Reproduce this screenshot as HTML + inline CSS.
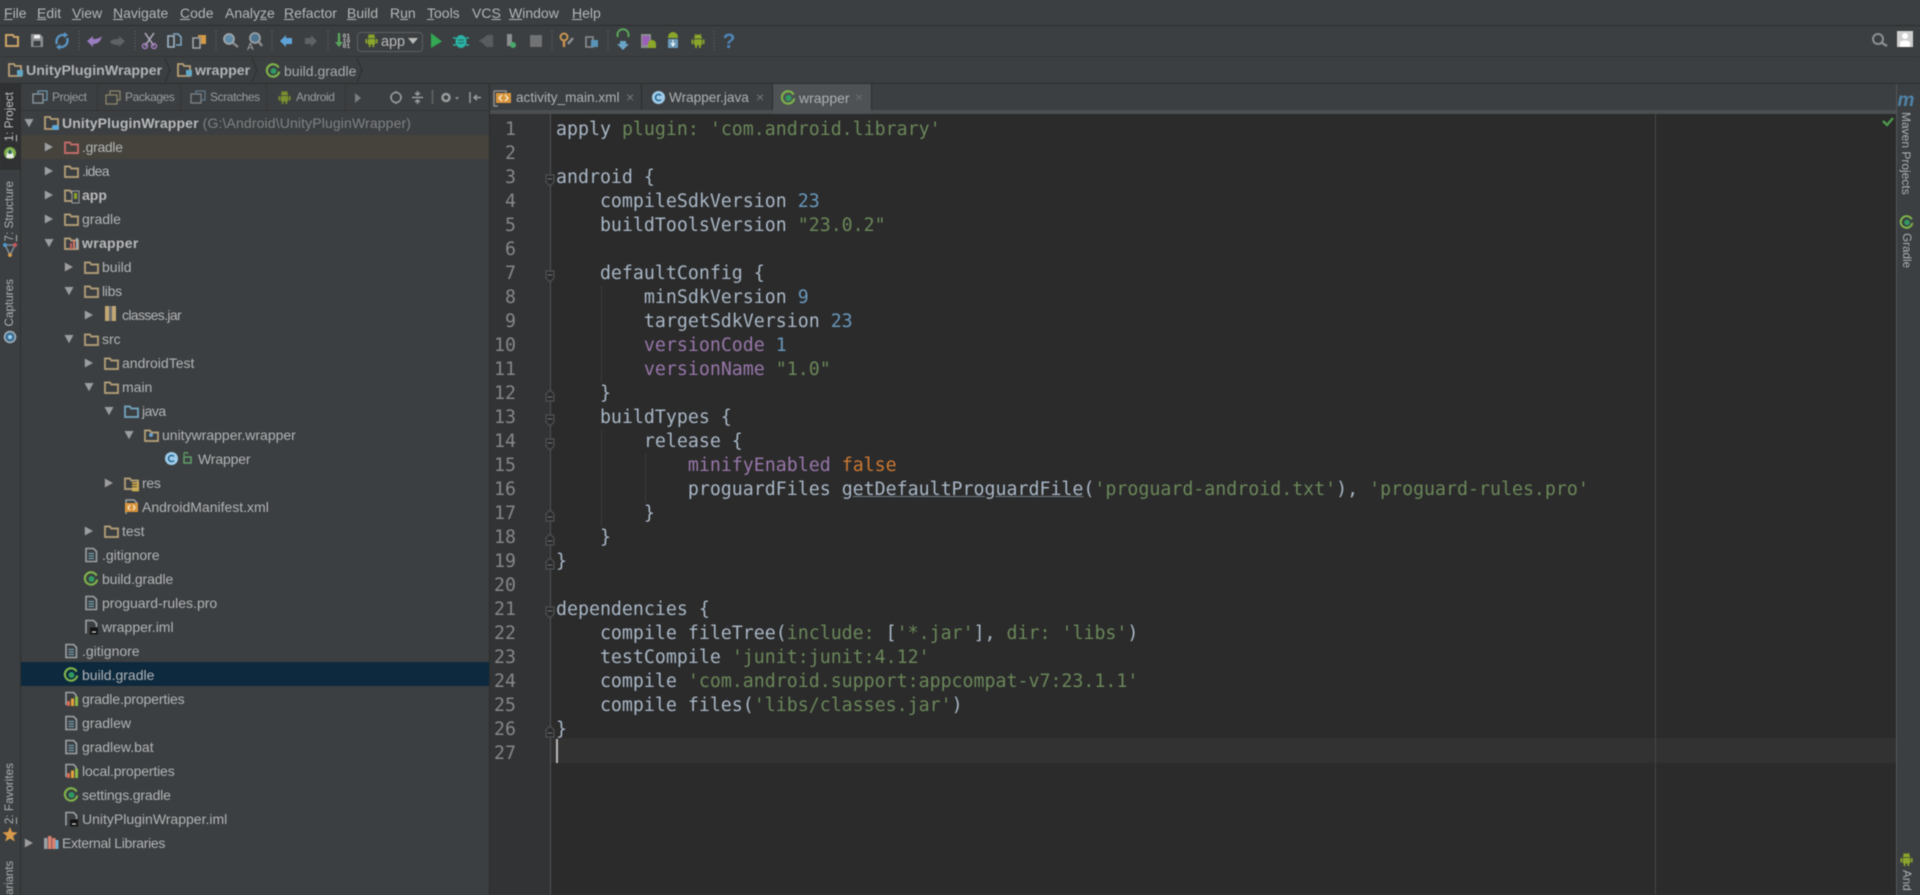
<!DOCTYPE html>
<html><head><meta charset="utf-8"><title>UnityPluginWrapper</title>
<style>
html,body{margin:0;padding:0;width:1920px;height:895px;overflow:hidden;background:#3c3f41}
#root{position:absolute;left:0;top:0;width:1920px;height:895px;overflow:hidden;font-family:"Liberation Sans",sans-serif;font-size:14px;color:#bbbbbb;filter:blur(.45px)}
.a{position:absolute;white-space:nowrap}
.b{position:absolute}
.m{top:5px;line-height:17px;font-size:14px;color:#b4b6b8}
.t{position:absolute;white-space:nowrap;line-height:24px;height:24px;color:#b2b4b6}
.tb{font-weight:bold;color:#b8babc}
pre{margin:0;position:absolute;font-family:"DejaVu Sans Mono",monospace;font-size:18.25px;line-height:24px}
.s{color:#6a8759}.n{color:#6897bb}.p{color:#9876aa}.k{color:#cc7832}.g{color:#6a8759}
.v{position:absolute;white-space:nowrap;font-size:11.7px;color:#adafb1;line-height:14px}
.vl{writing-mode:vertical-rl;transform:rotate(180deg);left:3px}
.vr{writing-mode:vertical-rl;left:1899px}
.th{top:89px;line-height:17px;font-size:12px;letter-spacing:-.4px;color:#9a9c9e}
.et{top:89px;line-height:18px;font-size:13.6px;color:#afb1b3}
.x{top:88px;line-height:18px;font-size:14px;color:#77797b}
svg#o{position:absolute;left:0;top:0}
u.dim{text-decoration-color:#70797f}
</style></head><body><div id="root">

<!-- frame backgrounds -->
<div class="b" style="left:0;top:25px;width:1920px;height:1px;background:#2b2d2e"></div>
<div class="b" style="left:0;top:56px;width:1920px;height:1px;background:#323436"></div>
<div class="b" style="left:0;top:83px;width:1920px;height:1px;background:#2b2d2e"></div>
<div class="b" style="left:0;top:84px;width:20px;height:86px;background:#2f3132"></div>
<div class="b" style="left:20px;top:84px;width:1px;height:811px;background:#2d2f30"></div>
<div class="b" style="left:21px;top:110px;width:468px;height:1px;background:#323436"></div>
<div class="b" style="left:21px;top:135px;width:468px;height:24px;background:#45433b"></div>
<div class="b" style="left:21px;top:662px;width:468px;height:24px;background:#0d293e"></div>
<div class="b" style="left:489px;top:84px;width:1px;height:811px;background:#2b2d2e"></div>
<!-- tool header separators -->
<div class="b" style="left:97px;top:84px;width:1px;height:26px;background:#333537"></div>
<div class="b" style="left:180px;top:84px;width:1px;height:26px;background:#333537"></div>
<div class="b" style="left:266px;top:84px;width:1px;height:26px;background:#333537"></div>
<div class="b" style="left:345px;top:84px;width:1px;height:26px;background:#333537"></div>
<!-- editor -->
<div class="b" style="left:490px;top:114px;width:1406px;height:781px;background:#2b2b2b"></div>
<div class="b" style="left:490px;top:114px;width:60px;height:781px;background:#313335"></div>
<div class="b" style="left:550px;top:114px;width:1px;height:781px;background:#505254"></div>
<div class="b" style="left:490px;top:110px;width:1406px;height:4px;background:#4c4f51"></div>
<div class="b" style="left:773px;top:84px;width:98px;height:30px;background:#4e5254"></div>
<div class="b" style="left:551px;top:738px;width:1345px;height:25px;background:#323232"></div>
<div class="b" style="left:1655px;top:114px;width:1px;height:781px;background:#444648"></div>
<div class="b" style="left:556px;top:739px;width:2px;height:24px;background:#bbbbbb"></div>
<!-- tab separators -->
<div class="b" style="left:641px;top:84px;width:1px;height:26px;background:#2b2d2e"></div>
<div class="b" style="left:772px;top:84px;width:1px;height:26px;background:#2b2d2e"></div>
<div class="b" style="left:871px;top:84px;width:1px;height:26px;background:#2b2d2e"></div>
<!-- indent guides -->
<div class="b" style="left:601px;top:286px;width:1px;height:96px;background:#3a3a3a"></div>
<div class="b" style="left:601px;top:430px;width:1px;height:96px;background:#3a3a3a"></div>
<div class="b" style="left:645px;top:454px;width:1px;height:48px;background:#3a3a3a"></div>
<!-- right strip -->
<div class="b" style="left:1896px;top:84px;width:1px;height:811px;background:#55585a"></div>

<!-- menu -->
<div class="a m" style="left:4px"><u>F</u>ile</div>
<div class="a m" style="left:37px"><u>E</u>dit</div>
<div class="a m" style="left:72px"><u>V</u>iew</div>
<div class="a m" style="left:113px"><u>N</u>avigate</div>
<div class="a m" style="left:180px"><u>C</u>ode</div>
<div class="a m" style="left:225px">Analy<u>z</u>e</div>
<div class="a m" style="left:284px"><u>R</u>efactor</div>
<div class="a m" style="left:347px"><u>B</u>uild</div>
<div class="a m" style="left:390px">R<u>u</u>n</div>
<div class="a m" style="left:427px"><u>T</u>ools</div>
<div class="a m" style="left:472px">VC<u>S</u></div>
<div class="a m" style="left:509px"><u>W</u>indow</div>
<div class="a m" style="left:572px"><u>H</u>elp</div>

<!-- combo -->
<div class="b" style="left:357px;top:32px;width:64px;height:18px;border:1px solid #5c5f61;border-radius:4px"></div>
<div class="a" style="left:381px;top:34px;line-height:17px;font-size:14.4px;color:#bbb">app</div>

<!-- breadcrumb -->
<div class="a tb" style="left:26px;top:63px;line-height:17px;color:#b2b4b6;font-size:14.2px">UnityPluginWrapper</div>
<div class="a tb" style="left:195px;top:63px;line-height:17px;color:#b2b4b6;font-size:14.2px">wrapper</div>
<div class="a" style="left:284px;top:63px;line-height:17px;color:#a8aaac">build.gradle</div>

<!-- tool header -->
<div class="a th" style="left:52px">Project</div>
<div class="a th" style="left:125px">Packages</div>
<div class="a th" style="left:210px">Scratches</div>
<div class="a th" style="left:296px">Android</div>

<!-- editor tabs -->
<div class="a et" style="left:516px">activity_main.xml</div>
<div class="a x" style="left:626px">×</div>
<div class="a et" style="left:669px">Wrapper.java</div>
<div class="a x" style="left:756px">×</div>
<div class="a et" style="left:799px;color:#aeb0b2;font-size:14px">wrapper</div>
<div class="a x" style="left:855px;color:#6c6e70">×</div>

<!-- vertical labels -->
<div class="v vl" style="top:92px;color:#bfc1c3"><u>1</u>: Project</div>
<div class="v vl" style="top:181px"><u>7</u>: Structure</div>
<div class="v vl" style="top:279px">Captures</div>
<div class="v vl" style="top:763px"><u>2</u>: Favorites</div>
<div class="v vl" style="top:861px;font-size:11.5px;letter-spacing:-.1px">ariants</div>
<div class="v vr" style="top:112px;font-size:12px">Maven Projects</div>
<div class="v vr" style="top:233px">Gradle</div>
<div class="v vr" style="top:870px">And</div>

<!-- project tree text -->
<div class="t tb" style="left:62px;top:111px;letter-spacing:.13px">UnityPluginWrapper <span style="font-weight:normal;color:#808284;font-size:14px">(G:\Android\UnityPluginWrapper)</span></div>
<div class="t" style="left:82px;top:135px;letter-spacing:-.3px">.gradle</div>
<div class="t" style="left:82px;top:159px;letter-spacing:-.7px">.idea</div>
<div class="t tb" style="left:82px;top:183px">app</div>
<div class="t" style="left:82px;top:207px">gradle</div>
<div class="t tb" style="left:82px;top:231px;letter-spacing:.3px">wrapper</div>
<div class="t" style="left:102px;top:255px">build</div>
<div class="t" style="left:102px;top:279px;letter-spacing:-.3px">libs</div>
<div class="t" style="left:122px;top:303px;letter-spacing:-.65px">classes.jar</div>
<div class="t" style="left:102px;top:327px">src</div>
<div class="t" style="left:122px;top:351px">androidTest</div>
<div class="t" style="left:122px;top:375px">main</div>
<div class="t" style="left:142px;top:399px;letter-spacing:-.5px">java</div>
<div class="t" style="left:162px;top:423px">unitywrapper.wrapper</div>
<div class="t" style="left:198px;top:447px;letter-spacing:-.15px">Wrapper</div>
<div class="t" style="left:142px;top:471px;letter-spacing:-.3px">res</div>
<div class="t" style="left:142px;top:495px">AndroidManifest.xml</div>
<div class="t" style="left:122px;top:519px">test</div>
<div class="t" style="left:102px;top:543px">.gitignore</div>
<div class="t" style="left:102px;top:567px;letter-spacing:-.1px">build.gradle</div>
<div class="t" style="left:102px;top:591px">proguard-rules.pro</div>
<div class="t" style="left:102px;top:615px">wrapper.iml</div>
<div class="t" style="left:82px;top:639px">.gitignore</div>
<div class="t" style="left:82px;top:663px">build.gradle</div>
<div class="t" style="left:82px;top:687px;letter-spacing:-.15px">gradle.properties</div>
<div class="t" style="left:82px;top:711px">gradlew</div>
<div class="t" style="left:82px;top:735px">gradlew.bat</div>
<div class="t" style="left:82px;top:759px;letter-spacing:-.15px">local.properties</div>
<div class="t" style="left:82px;top:783px;letter-spacing:-.15px">settings.gradle</div>
<div class="t" style="left:82px;top:807px">UnityPluginWrapper.iml</div>
<div class="t" style="left:62px;top:831px;letter-spacing:-.33px">External Libraries</div>

<!-- gutter numbers -->
<pre style="left:480px;top:118px;width:36px;text-align:right;color:#85888a">1
2
3
4
5
6
7
8
9
10
11
12
13
14
15
16
17
18
19
20
21
22
23
24
25
26
27</pre>

<!-- code -->
<pre style="left:556px;top:118px;color:#a9b7c6">apply <span class="g">plugin: 'com.android.library'</span>

android {
    compileSdkVersion <span class="n">23</span>
    buildToolsVersion <span class="s">"23.0.2"</span>

    defaultConfig {
        minSdkVersion <span class="n">9</span>
        targetSdkVersion <span class="n">23</span>
        <span class="p">versionCode</span> <span class="n">1</span>
        <span class="p">versionName</span> <span class="s">"1.0"</span>
    }
    buildTypes {
        release {
            <span class="p">minifyEnabled</span> <span class="k">false</span>
            proguardFiles <u class="dim">getDefaultProguardFile</u>(<span class="s">'proguard-android.txt'</span>), <span class="s">'proguard-rules.pro'</span>
        }
    }
}

dependencies {
    compile fileTree(<span class="g">include:</span> [<span class="s">'*.jar'</span>], <span class="g">dir:</span> <span class="s">'libs'</span>)
    testCompile <span class="s">'junit:junit:4.12'</span>
    compile <span class="s">'com.android.support:appcompat-v7:23.1.1'</span>
    compile files(<span class="s">'libs/classes.jar'</span>)
}</pre>

<!-- icon overlay -->
<svg id="o" width="1920" height="895" viewBox="0 0 1920 895" xmlns="http://www.w3.org/2000/svg">
<defs>
<pattern id="dith" width="3" height="3" patternUnits="userSpaceOnUse"><rect width="1.5" height="1.5" fill="#77797b"/><rect x="1.5" y="1.5" width="1.5" height="1.5" fill="#77797b"/></pattern>
<symbol id="fd" viewBox="0 0 16 16"><path d="M2 3.5H7L8.2 5.5H15V14H2Z" fill="none" stroke="#ae9a76" stroke-width="1.9"/></symbol>
<symbol id="fr" viewBox="0 0 16 16"><path d="M2 3.5H7L8.2 5.5H15V14H2Z" fill="none" stroke="#c46a6a" stroke-width="1.9"/></symbol>
<symbol id="fb" viewBox="0 0 16 16"><path d="M2 3.5H7L8.2 5.5H15V14H2Z" fill="none" stroke="#6f9fb8" stroke-width="1.9"/></symbol>
<symbol id="gr" viewBox="0 0 16 16"><path d="M13.6 4.6A6.2 6.2 0 1 0 14.2 8.5" fill="none" stroke="#7db34a" stroke-width="2.2"/><circle cx="8.5" cy="8" r="3" fill="#2f9a62"/></symbol>
<symbol id="fl" viewBox="0 0 16 16"><path d="M3 1.5H10.5L13.5 4.5V14.5H3Z" fill="none" stroke="#9ba3a7" stroke-width="1.6"/><path d="M5.5 6.5H11M5.5 9H11M5.5 11.5H11" stroke="#6f9bab" stroke-width="1.2"/></symbol>
<symbol id="pr" viewBox="0 0 16 16"><path d="M3 14V1.5H10.5L13 4V7" fill="none" stroke="#9ba3a7" stroke-width="1.6"/><rect x="4" y="10" width="3" height="5" fill="#d9694f"/><rect x="8" y="7.5" width="3" height="7.5" fill="#e6a33c"/><rect x="12" y="5.5" width="3" height="9.5" fill="#8fb84a"/></symbol>
<symbol id="im" viewBox="0 0 16 16"><path d="M3 14.5V1.5H10.5L13.5 4.5V8" fill="none" stroke="#9ba3a7" stroke-width="1.6"/><rect x="7" y="8.5" width="8" height="7" fill="#151515"/><path d="M9 13H13" stroke="#ddd" stroke-width="1.2"/></symbol>
<symbol id="cl" viewBox="0 0 16 16"><circle cx="8" cy="8" r="7" fill="#9ecbea"/><path d="M10.6 5.8A3.3 3.3 0 1 0 10.6 10.2" fill="none" stroke="#1f5c86" stroke-width="1.5"/></symbol>
<symbol id="an" viewBox="0 0 16 16"><path d="M4 5.5A4 4 0 0 1 12 5.5Z" fill="#8aa62b"/><rect x="4" y="6.3" width="8" height="6" rx="1" fill="#8aa62b"/><rect x="1.5" y="6.3" width="1.8" height="5" rx=".9" fill="#8aa62b"/><rect x="12.7" y="6.3" width="1.8" height="5" rx=".9" fill="#8aa62b"/><rect x="5.2" y="12" width="1.8" height="3" fill="#8aa62b"/><rect x="9" y="12" width="1.8" height="3" fill="#8aa62b"/><path d="M5 1L6 3M11 1L10 3" stroke="#8aa62b"/></symbol>
<symbol id="fo" viewBox="0 0 16 16"><path d="M4 2H12V9L8 13L4 9Z" fill="#2b2b2b" stroke="#55575a"/><path d="M5.5 6H10.5" stroke="#75777a"/></symbol>
<symbol id="fc" viewBox="0 0 16 16"><path d="M4 13H12V6L8 2L4 6Z" fill="#2b2b2b" stroke="#55575a"/><path d="M5.500 9H10.500" stroke="#75777a"/></symbol>
<symbol id="r" viewBox="0 0 10 10"><path d="M.8 .5L9 5L.8 9.500Z" fill="#9b9d9f"/></symbol>
<symbol id="d" viewBox="0 0 10 10"><path d="M.5 1H9.500L5 9.200Z" fill="#9b9d9f"/></symbol>
</defs>

<!-- toolbar -->
<g fill="none">
<path d="M6 35H13L14 37H18V46H6Z" stroke="#c9a468" stroke-width="2"/>
<path d="M31 34H40L43 37V47H31Z" fill="#8b8e90"/><rect x="34" y="35" width="6" height="3.5" fill="#eee"/><rect x="33.500" y="41" width="7" height="5" fill="#3c3f41"/>
<path d="M57 44A6.500 6.500 0 0 1 62 35H66M67 38A6.500 6.500 0 0 1 62 47H58" stroke="#5a94c4" stroke-width="2.400"/>
<path d="M64 32L68 35L64 38ZM60 44L56 47L60 50Z" fill="#5a94c4"/>
<path d="M79 31V51M135 31V51M216 31V51M272 31V51M328 31V51M552 31V51M608 31V51M714 31V51" stroke="#6a6c6e" stroke-dasharray="1 2"/>
<path d="M87 41L93 36V39C97 39 100 38 102 36C101 41 98 44 93 44V47Z" fill="#9a7cc0"/>
<path d="M125 41L119 36V39C115 39 112 39 110 42C112 44 114 45 119 45V47Z" fill="#5f6264"/>
<path d="M145 33L154 46M154 33L145 46" stroke="#a9a2b5" stroke-width="1.600"/><circle cx="145" cy="46" r="2.500" stroke="#a07cc0" stroke-width="1.500"/><circle cx="154" cy="46" r="2.500" stroke="#a07cc0" stroke-width="1.500"/>
<path d="M168 36H174V47H168Z" stroke="#9fb5c5" stroke-width="1.600"/><path d="M173 34H178L181 37V45H176" stroke="#7fa7c4" stroke-width="1.600"/>
<path d="M193 38H200V48H193Z" stroke="#9fa5a8" stroke-width="1.600"/><path d="M198 35H206V44H201V37H198Z" fill="#d49a45"/>
<circle cx="229" cy="39" r="5" fill="#5f8ba8" stroke="#a0a6aa" stroke-width="1.800"/><path d="M233 43L238 47" stroke="#8a8c8e" stroke-width="2.400"/>
<circle cx="255" cy="38" r="5" fill="#4f7690" stroke="#9aa0a4" stroke-width="1.800"/><path d="M259 42L262 46" stroke="#8a8c8e" stroke-width="2.400"/>
<text x="247" y="50" font-family="Liberation Sans" font-size="10" fill="#a8aaac">A</text>
<path d="M280 41L286 35V38H292V44H286V47Z" fill="#5fa4d8"/>
<path d="M317 41L311 35V38H305V44H311V47Z" fill="#5f6264"/>
<path d="M339 33V43" stroke="#5aa55a" stroke-width="2.400"/><path d="M335 42L339 47L343 42Z" fill="#5aa55a"/>
<text x="342.500" y="38" font-family="Liberation Mono" font-size="6.500" font-weight="bold" fill="#bbb">01</text>
<text x="342.500" y="43" font-family="Liberation Mono" font-size="6.500" font-weight="bold" fill="#bbb">10</text>
<text x="342.500" y="48" font-family="Liberation Mono" font-size="6.500" font-weight="bold" fill="#bbb">01</text>
<path d="M431 33L442 41.500L431 48Z" fill="#34a853"/>
<ellipse cx="461" cy="41.500" rx="5.500" ry="6.500" fill="#2bb3a5"/><path d="M453 38H456M466 38H469M453 45H456M466 45H469" stroke="#2bb3a5" stroke-width="1.400"/><path d="M458 40H464M458 43H464" stroke="#24665f"/>
<path d="M479 41L487 35H493V47H487Z" fill="url(#dith)"/>
<rect x="507" y="34" width="5" height="12" fill="#8b8e90"/><circle cx="513" cy="45" r="3" fill="#46a86b"/>
<rect x="530" y="35" width="12" height="12" fill="#707274"/>
<circle cx="564" cy="37" r="3.500" stroke="#c99552" stroke-width="2"/><path d="M564 41V47" stroke="#c99552" stroke-width="2.400"/><path d="M568 44L573 38" stroke="#909294" stroke-width="2.400"/>
<path d="M586 37H593V47H586Z" stroke="#8b8e90" stroke-width="1.600"/><path d="M591 40H598V47H591Z" fill="#5a93b8"/>
<path d="M618 37A5.500 5.500 0 1 1 628 37" stroke="#5aa55a" stroke-width="2"/><path d="M620 41H626V44H629L623 50L617 44H620Z" fill="#6aa5c8"/>
<rect x="641" y="34" width="10" height="14" fill="#8b8e90"/><rect x="642.500" y="36" width="7" height="9" fill="#9c60ba"/><path d="M648 44A3.500 3.500 0 0 1 656 44V48H648Z" fill="#8aa62b"/>
<path d="M668 37A5 5 0 0 1 678 37V38H668Z" fill="#8aa62b"/><rect x="668" y="39" width="10" height="9" fill="#6a9ab8"/><path d="M673 40V45M671 43L673 46L675 43" stroke="#fff" stroke-width="1"/>
</g>
<use href="#an" x="690" y="33" width="16" height="16"/>
<text x="729" y="48" font-family="Liberation Sans" font-weight="bold" font-size="21" fill="#4e84b5" text-anchor="middle">?</text>
<use href="#an" x="364" y="33" width="15" height="15"/>
<path d="M408 38H418L413 44Z" fill="#bbbbbb"/>
<circle cx="1878" cy="39" r="5" fill="none" stroke="#8d8f91" stroke-width="2"/><path d="M1882 43L1887 46" stroke="#8d8f91" stroke-width="2.400"/>
<rect x="1897" y="31" width="16" height="16" fill="#cfcfcf"/><circle cx="1905" cy="36" r="3" fill="#fff"/><path d="M1900 47V43C1900 41 1903 40.500 1905 40.500C1907 40.500 1910 41 1910 43V47Z" fill="#fff"/>

<!-- breadcrumb icons -->
<g><path d="M9 64H14L15 66H21V76H9Z" fill="none" stroke="#b79f76" stroke-width="1.800"/><rect x="17" y="70" width="6" height="6" fill="#5fa8c8"/></g>
<g><path d="M178 64H183L184 66H190V76H178Z" fill="none" stroke="#b79f76" stroke-width="1.800"/><rect x="186" y="70" width="6" height="6" fill="#5fa8c8"/></g>
<use href="#gr" x="265" y="63" width="16" height="16"/>
<path d="M165 58L170 70L165 82M252 58L257 70L252 82M357 58L362 70L357 82" fill="none" stroke="#2d2f30"/>

<!-- tool header icons -->
<g fill="none" stroke-width="1.300">
<rect x="33" y="94" width="10" height="9" stroke="#8f9ca5"/><path d="M38 94V91H47V100H43" stroke="#6d96ad"/>
<rect x="106" y="95" width="11" height="9" stroke="#8a8468"/><path d="M110 95V91H120V100H117" stroke="#8a8468"/>
<rect x="191" y="94" width="10" height="9" stroke="#7c8489"/><path d="M196 94V91H205V100H201" stroke="#5f7a8a"/>
</g>
<use href="#an" x="277" y="90" width="15" height="15" opacity=".8"/>
<path d="M355 93L361 98L355 103Z" fill="#7a7c7e"/>
<g fill="none" stroke="#9a9c9e" stroke-width="1.500">
<circle cx="396" cy="97.500" r="5"/><path d="M396 91V93M396 102V104M390 97.500H392M400 97.500H402"/>
<path d="M412 97.500H423M417.500 91V95M417.500 100V104M415 93L417.500 95L420 93M415 102L417.500 100L420 102"/>
<path d="M432.500 90V104" stroke="#666"/>
<circle cx="446" cy="97.500" r="3.500" stroke-width="2.500"/>
<path d="M470 92V103M481 97.500H474M477 95L474 97.500L477 100"/>
</g>
<path d="M455 97H459L457 100Z" fill="#8a8c8e"/>

<!-- editor tab icons -->
<path d="M494 91H506V96M494 91V106H498" fill="none" stroke="#8b8e90" stroke-width="1.500"/><rect x="496" y="93" width="15" height="10" fill="#d9953c"/><path d="M502 95L499 98L502 101M505 95L508 98L505 101" stroke="#fff" fill="none"/>
<use href="#cl" x="651" y="90" width="15" height="15"/>
<use href="#gr" x="780" y="90" width="16" height="16"/>

<!-- left strip icons -->
<circle cx="10" cy="153" r="6" fill="#7fb04a"/><path d="M6 158L8 150H12L14 158Z" fill="#eee"/><circle cx="10" cy="152" r="2" fill="#2f6b4a"/>
<path d="M5 245L10 255L15 245M5 245H15" fill="none" stroke="#7a8b99" stroke-width="1.500"/><circle cx="5" cy="245" r="2" fill="#4e9ad4"/><circle cx="15" cy="245" r="2" fill="#c85a5a"/><circle cx="10" cy="255" r="2" fill="#d09a50"/>
<circle cx="10" cy="337" r="5.500" fill="#3d6f95" stroke="#a8b4bc" stroke-width="1.500"/><circle cx="10" cy="337" r="2" fill="#9bd0ee"/>
<path d="M10 827L12 832L17.500 832.500L13.200 836L14.700 841.500L10 838.500L5.300 841.500L6.800 836L2.500 832.500L8 832Z" fill="#d99a4a"/>

<!-- right strip icons -->
<text x="1906" y="106" font-family="Liberation Sans" font-style="italic" font-weight="bold" font-size="19" fill="#4e83a8" text-anchor="middle">m</text>
<use href="#gr" x="1899" y="215" width="15" height="15"/>
<use href="#an" x="1899" y="852" width="15" height="15"/>
<path d="M1883 121L1887 125L1893 118" fill="none" stroke="#4f9a4f" stroke-width="2.400"/>

<!-- tree arrows -->
<use href="#d" x="24" y="118" width="10" height="10"/>
<use href="#r" x="44" y="142" width="10" height="10"/>
<use href="#r" x="44" y="166" width="10" height="10"/>
<use href="#r" x="44" y="190" width="10" height="10"/>
<use href="#r" x="44" y="214" width="10" height="10"/>
<use href="#d" x="44" y="238" width="10" height="10"/>
<use href="#r" x="64" y="262" width="10" height="10"/>
<use href="#d" x="64" y="286" width="10" height="10"/>
<use href="#r" x="84" y="310" width="10" height="10"/>
<use href="#d" x="64" y="334" width="10" height="10"/>
<use href="#r" x="84" y="358" width="10" height="10"/>
<use href="#d" x="84" y="382" width="10" height="10"/>
<use href="#d" x="104" y="406" width="10" height="10"/>
<use href="#d" x="124" y="430" width="10" height="10"/>
<use href="#r" x="104" y="478" width="10" height="10"/>
<use href="#r" x="84" y="526" width="10" height="10"/>
<use href="#r" x="24" y="838" width="10" height="10"/>

<!-- tree icons -->
<path d="M45 117H50L51 119H58V129H45Z" fill="none" stroke="#b79f76" stroke-width="1.800"/><rect x="52" y="125" width="7" height="5" rx="2" fill="#5fa8d8"/>
<use href="#fr" x="63" y="139" width="16" height="16"/>
<use href="#fd" x="63" y="163" width="16" height="16"/>
<use href="#fd" x="63" y="187" width="16" height="16"/><rect x="72" y="191" width="7" height="12" fill="#3c3f41" stroke="#9a9c9e"/><rect x="74" y="193" width="3" height="6" fill="#8aa62b"/>
<use href="#fd" x="63" y="211" width="16" height="16"/>
<use href="#fd" x="63" y="235" width="16" height="16"/><rect x="70" y="243" width="2" height="6" fill="#c95f5f"/><rect x="73" y="240" width="2" height="9" fill="#d67a6a"/><rect x="76" y="238" width="2" height="11" fill="#9eb0bb"/>
<use href="#fd" x="83" y="259" width="16" height="16"/>
<use href="#fd" x="83" y="283" width="16" height="16"/>
<rect x="105" y="306" width="11" height="15" fill="#c1a876"/><rect x="109" y="306" width="3" height="15" fill="#6a6c6e"/>
<use href="#fd" x="83" y="331" width="16" height="16"/>
<use href="#fd" x="103" y="355" width="16" height="16"/>
<use href="#fd" x="103" y="379" width="16" height="16"/>
<use href="#fb" x="123" y="403" width="16" height="16"/>
<use href="#fd" x="143" y="427" width="16" height="16"/><circle cx="151" cy="435" r="2" fill="#6aa0d0"/>
<use href="#cl" x="164" y="451" width="15" height="15"/>
<path d="M184 456V454C184 452 188 452 188 454" fill="none" stroke="#5fa06a" stroke-width="1.200"/><rect x="184" y="457" width="7" height="6" fill="none" stroke="#5fa06a" stroke-width="1.500"/>
<use href="#fd" x="123" y="475" width="16" height="16"/><path d="M132 483H139M132 485.500H139M132 488H139M132 490.500H139" stroke="#e0b84a" stroke-width="1.500"/>
<path d="M126 514V500H134L137 503V505" fill="none" stroke="#9ba3a7" stroke-width="1.500"/><rect x="125" y="503" width="13" height="9" fill="#d9953c"/><path d="M130 505L128 507.500L130 510M133 505L135 507.500L133 510" fill="none" stroke="#fff"/>
<use href="#fd" x="103" y="523" width="16" height="16"/>
<use href="#fl" x="83" y="547" width="16" height="16"/>
<use href="#gr" x="83" y="571" width="16" height="16"/>
<use href="#fl" x="83" y="595" width="16" height="16"/>
<use href="#im" x="83" y="619" width="16" height="16"/>
<use href="#fl" x="63" y="643" width="16" height="16"/>
<use href="#gr" x="63" y="667" width="16" height="16"/>
<use href="#pr" x="63" y="691" width="16" height="16"/>
<use href="#fl" x="63" y="715" width="16" height="16"/>
<use href="#fl" x="63" y="739" width="16" height="16"/>
<use href="#pr" x="63" y="763" width="16" height="16"/>
<use href="#gr" x="63" y="787" width="16" height="16"/>
<use href="#im" x="63" y="811" width="16" height="16"/>
<rect x="44" y="838" width="3.500" height="11" fill="#9aa0a4"/><rect x="48" y="836" width="3.500" height="13" fill="#d98070"/><rect x="52" y="838" width="3.500" height="11" fill="#d98070"/><rect x="55.500" y="840" width="3" height="9" fill="#6fb0d0"/>

<!-- fold markers -->
<use href="#fo" x="542" y="173" width="16" height="16"/>
<use href="#fo" x="542" y="269" width="16" height="16"/>
<use href="#fc" x="542" y="388" width="16" height="16"/>
<use href="#fo" x="542" y="413" width="16" height="16"/>
<use href="#fo" x="542" y="437" width="16" height="16"/>
<use href="#fc" x="542" y="508" width="16" height="16"/>
<use href="#fc" x="542" y="532" width="16" height="16"/>
<use href="#fc" x="542" y="556" width="16" height="16"/>
<use href="#fo" x="542" y="605" width="16" height="16"/>
<use href="#fc" x="542" y="724" width="16" height="16"/>
</svg>
</div></body></html>
